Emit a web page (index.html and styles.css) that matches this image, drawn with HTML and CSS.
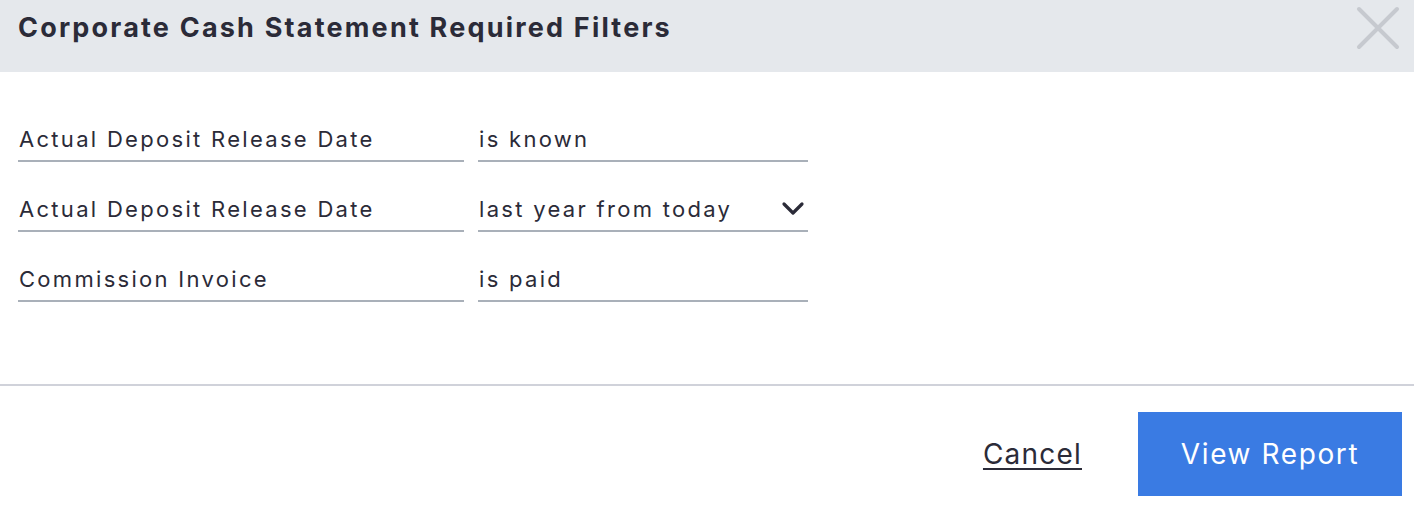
FILE: index.html
```html
<!DOCTYPE html>
<html lang="en">
<head>
<meta charset="utf-8">
<title>Corporate Cash Statement Required Filters</title>
<link rel="stylesheet" href="styles.css">
</head>
<body>
<div class="dialog">
  <header class="dialog-header">
    <h1 class="dialog-title">Corporate Cash Statement Required Filters</h1>
    <button class="close-btn" aria-label="Close">
      <svg viewBox="0 0 44 44" width="44" height="44"><path d="M3 3 L41 41 M41 3 L3 41" stroke="#c6c9cf" stroke-width="4" stroke-linecap="round" fill="none"/></svg>
    </button>
  </header>
  <div class="dialog-body">
    <div class="filter-row">
      <div class="field field-label">Actual Deposit Release Date</div>
      <div class="field field-value">is known</div>
    </div>
    <div class="filter-row">
      <div class="field field-label">Actual Deposit Release Date</div>
      <div class="field field-value field-select">
        <span>last year from today</span>
        <svg class="chevron" viewBox="0 0 24 16" width="24" height="16"><path d="M3 3 L12 12 L21 3" stroke="#2b2b38" stroke-width="3.2" fill="none" stroke-linecap="round" stroke-linejoin="round"/></svg>
      </div>
    </div>
    <div class="filter-row">
      <div class="field field-label">Commission Invoice</div>
      <div class="field field-value">is paid</div>
    </div>
  </div>
  <div class="dialog-footer">
    <a class="cancel-link" href="#">Cancel</a>
    <button class="primary-btn">View Report</button>
  </div>
</div>
</body>
</html>
```
FILE: styles.css
```css
* { box-sizing: border-box; }
html, body { margin: 0; padding: 0; background: #fff; }
body {
  font-family: Inter, "Open Sans", sans-serif;
  color: #2b2b38;
}
.dialog { width: 1414px; }
.dialog-header {
  height: 72px;
  background: #e5e8ec;
  display: flex;
  align-items: flex-start;
  justify-content: space-between;
  padding: 6px 14px 0 18px;
}
.dialog-title {
  margin: 0;
  font-size: 27px;
  font-weight: 700;
  line-height: 44px;
  letter-spacing: 2.2px;
  color: #2b2b38;
}
.close-btn {
  border: 0;
  background: transparent;
  padding: 0;
  width: 44px;
  height: 44px;
  display: block;
}
.close-btn svg { display: block; }
.dialog-body {
  padding: 20px 18px 82px;
  border-bottom: 2px solid #d0d2da;
}
.filter-row {
  display: flex;
  gap: 14px;
}
.field {
  height: 70px;
  border-bottom: 2px solid #a9b0b9;
  display: flex;
  align-items: flex-end;
  padding-bottom: 9px;
  font-size: 22px;
  line-height: 24px;
  letter-spacing: 2.3px;
  white-space: nowrap;
}
.field-label { width: 446px; padding-left: 1px; }
.field-value { width: 330px; padding-left: 1px; }
.field-select { justify-content: space-between; }
.chevron { margin-right: 3px; margin-bottom: 4px; }
.dialog-footer {
  display: flex;
  justify-content: flex-end;
  align-items: center;
  gap: 56px;
  padding: 26px 12px 0 0;
}
.cancel-link {
  font-size: 28px;
  letter-spacing: 1.2px;
  color: #2b2b38;
  text-decoration: underline;
  text-underline-offset: 4px;
  text-decoration-thickness: 2px;
}
.primary-btn {
  width: 264px;
  height: 84px;
  border: 0;
  background: #3a7be3;
  color: #fff;
  font-family: inherit;
  font-size: 28px;
  letter-spacing: 1.6px;
  padding: 0;
}
```
